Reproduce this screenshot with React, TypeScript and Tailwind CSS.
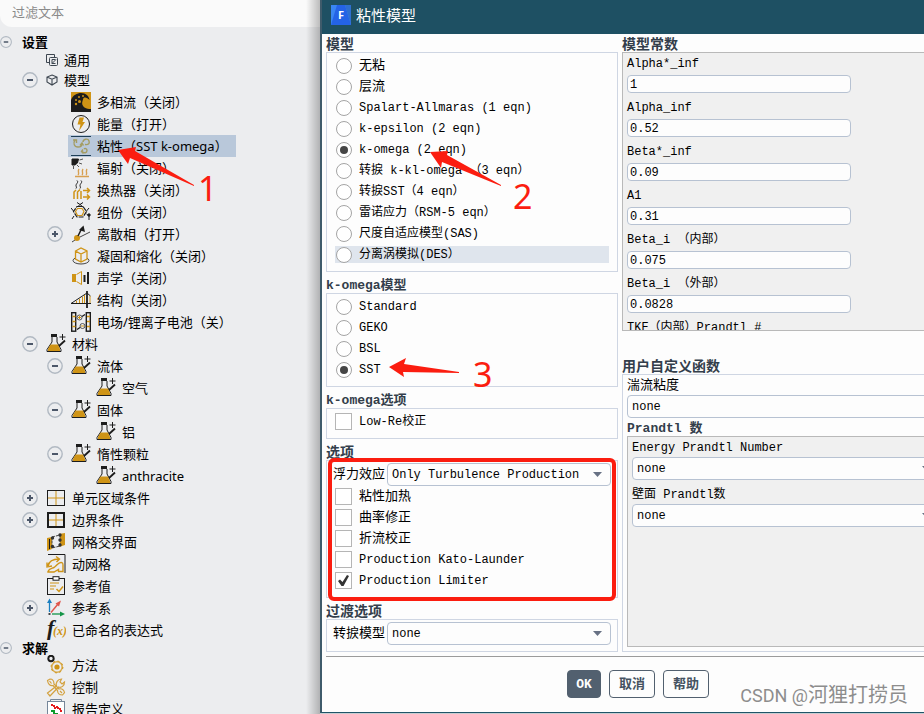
import React, { useId } from "react";

const GOLD = "#cf9416";
const INK = "#1c1c1c";

type IconProps = { children: React.ReactNode };

const Svg = ({ children }: IconProps) => (
  <svg viewBox="0 0 20 20" className="size-5 shrink-0" fill="none" stroke={INK} aria-hidden="true">
    {children}
  </svg>
);

const GeneralIcon = () => (
  <svg viewBox="0 0 12 12" className="size-3 shrink-0" fill="none" stroke="#3d4650" aria-hidden="true">
    <path d="M3 8.500H.5V.5h8V3" />
    <rect x="3.500" y="3.500" width="8" height="8" rx="1" />
    <path d="M9.500 5.500H6v4h3.500M6 9.500l4-4" />
  </svg>
);

const ModelIcon = () => (
  <svg viewBox="0 0 12 12" className="size-3 shrink-0" fill="none" stroke="#3d4650" strokeWidth="1.100" aria-hidden="true">
    <path d="M6 1l5 2v5L6 11 1 8V3zM1 3l5 2.200L11 3M6 5.200V11" />
  </svg>
);

const MultiphaseIcon = () => (
  <Svg>
    <rect width="20" height="20" fill={GOLD} stroke="none" />
    <path
      d="M0 20V8C2 3 6 1 10 1c5 0 8 3 8.500 7-2-2-4-3-6-2l-1 3c-1 3 0 5 2 6.500 2 1 4 1.500 6.500 1.500v3z"
      fill={INK}
      stroke="none"
    />
    <g fill={GOLD} stroke="none">
      <circle cx="5" cy="8" r="1" />
      <circle cx="8" cy="5" r="1" />
      <circle cx="5" cy="12" r="1.200" />
      <circle cx="8.500" cy="9.500" r="1.500" />
      <circle cx="12" cy="4" r="1" />
    </g>
  </Svg>
);

const EnergyIcon = () => (
  <Svg>
    <circle cx="10" cy="10" r="8.500" />
    <path d="M8.500 3.500h4.500L11.500 8H14L8 17l1.500-6.500h-3z" fill={GOLD} stroke="none" />
  </Svg>
);

const ViscousIcon = () => (
  <Svg>
    <path d="M0 .5h20M0 19.500h20" stroke="#1f3f57" />
    <g stroke="#a49c62" strokeWidth="1.400">
      <path d="M4 4c-2 3-1 7 3 7 2 0 4-1 4-3" />
      <path d="M12 6c0-3 5-4 6-1s-1 4-4 3.500M11 15.500c2 2 5 1.500 5-1 0-2-2-2.500-3-1.500" />
      <path d="M2 4h3.500V7M9 9.500L11 7l1.500 2.500M12 13.500l-1.500 2 2 2" />
    </g>
  </Svg>
);

const RadiationIcon = () => (
  <Svg>
    <path d="M1 1h6.500l-1 4L4 7H1z" fill={INK} />
    <path d="M8.500 2l3.500-1M8 5l3 1M6 7l2 2M2.500 8v3" stroke="#555" />
    <g stroke="#d8a050" strokeWidth="1.400">
      <path d="M4 18.500h14M7 17c2-2-1-3 1-6M11 17c2-2-1-3 1-6M15 17c2-2-1-3 1-6" />
    </g>
  </Svg>
);

const HeatIcon = () => (
  <Svg>
    <path d="M6 .5c2 2-1 3-1 5 0 1 1 2 0 3M10 .5c2 2-1 3-1 5 0 1 1 2 0 3" />
    <g stroke={GOLD} strokeWidth="1.500">
      <path d="M3 19v-7l2-2M6.500 19v-7L9 9.500M10 19v-8" />
      <path d="M12 10.500h6M12 17h6M16 8l2.500 2.500L16 13M16 14.500l2.500 2.500-2.500 2.500" />
    </g>
  </Svg>
);

const SpeciesIcon = () => (
  <Svg>
    <path d="M6 4.500h6l3.500 5-3.500 5.500H6l-3.500-5.500z" strokeWidth="1.200" strokeDasharray="5 1" />
    <path d="M6.500 5L9 2.500 12 5M9 2.500L6 .5M9 2.500L12 .5M2.500 9L0 6M15.500 9L18 6M15.500 12l2.500 2v4M3 14l-2 3" />
    <path d="M6.500 6.500h4.500l2 3-2 4H6.500l-2-4z" stroke={GOLD} strokeWidth="1.200" />
    <circle cx="18" cy="13" r="1.200" fill={INK} />
  </Svg>
);

const DiscreteIcon = () => (
  <Svg>
    <path d="M1 18l6-4 12-6" stroke="#444" />
    <circle cx="6" cy="14" r="3" fill={GOLD} stroke="none" />
    <path d="M7 12l4-8" strokeWidth="1.500" />
    <path d="M8 6l4.500-4.500L14 8z" fill={INK} stroke="none" />
  </Svg>
);

const SolidifyIcon = () => (
  <Svg>
    <ellipse cx="10" cy="14.500" rx="8" ry="3.500" stroke="#444" />
    <path
      d="M4.500 5L10 2l6 3v8l-6 3-5.500-3zM4.500 5L10 8l6-3M10 8v8"
      stroke={GOLD}
      strokeWidth="1.300"
      fill="#ecedef"
    />
  </Svg>
);

const AcousticIcon = () => (
  <Svg>
    <path d="M1 6h4v8H1z" fill={GOLD} stroke="none" />
    <path d="M5.500 6.500l5-3v13l-5-3" stroke={GOLD} />
    <path d="M13.500 7v7" strokeWidth="2" />
    <path d="M17 4v12" strokeWidth="2" />
  </Svg>
);

const StructureIcon = () => (
  <Svg>
    <path d="M0 13.500h20M0 13.500L16 3l3.500 3" />
    <path d="M16 1v17" strokeWidth="1.800" />
    <path d="M5.500 11v2M8.500 9v4M11.500 7v6M13.500 5v8M19 6v7" stroke={GOLD} />
  </Svg>
);

const BatteryIcon = () => (
  <Svg>
    <rect x=".700" y=".700" width="4" height="18.500" strokeWidth="1.400" />
    <rect x="15.300" y=".700" width="4" height="18.500" strokeWidth="1.400" />
    <path
      d="M1.500 4.500h3M1.500 9.500h3M1.500 14.500h3M16 4.500h3M16 9.500h3M16 14.500h3"
      stroke={GOLD}
      strokeWidth="1.300"
    />
    <circle cx="8.500" cy="5.500" r="2.500" stroke="#555" />
    <circle cx="11.500" cy="14" r="2.500" stroke="#555" />
    <path d="M7 5.500h3M8.500 4v3M10 14h3" stroke={GOLD} />
    <path d="M11 4.500l3-2M9 15.500l-3 2" strokeWidth="1.300" />
  </Svg>
);

const FlaskIcon = () => (
  <Svg>
    <path d="M5 0h6v3H5z" fill={INK} stroke="none" />
    <path d="M6 3v5L1 15.500v2h14v-2L11 8V3" />
    <path d="M4.500 10.500h7.500l2 4.500v2H2v-2z" fill={GOLD} stroke="none" />
    <path d="M16.500 0v6M13.500 3h6" />
    <path d="M13 12l6-5.500" strokeWidth="1.800" />
  </Svg>
);

const CellZoneIcon = () => (
  <Svg>
    <path d="M10 2v16M2 10h16" stroke={GOLD} />
    <rect x="1.500" y="2.500" width="17" height="15" />
  </Svg>
);

const BoundaryIcon = () => (
  <Svg>
    <path d="M10 3v14M2 10h16" stroke={GOLD} />
    <rect x="2" y="3" width="16" height="14" strokeWidth="2" />
  </Svg>
);

const InterfaceIcon = () => (
  <Svg>
    <path d="M1 6l5-1v12l-5 2zM13 2l6-1v12l-6 2z" fill={GOLD} stroke="none" />
    <path d="M3.500 7v10" />
    <path d="M6 5l8-2v11l-8 2z" fill="#ecedef" stroke="#444" strokeDasharray="3 1" />
    <g fill="#333" stroke="none">
      <circle cx="6.500" cy="6" r="1.700" />
      <circle cx="14" cy="3" r="1.700" />
      <circle cx="6.500" cy="14.500" r="1.700" />
      <circle cx="14" cy="8" r="1.700" />
      <circle cx="14" cy="13" r="1.700" />
    </g>
  </Svg>
);

const DynamicMeshIcon = () => (
  <Svg>
    <path d="M2 .5h17V19" />
    <g stroke={GOLD} strokeWidth="1.400">
      <path d="M2 12c1-5 5-7 11-7M10 2.500L13.500 5l-3 3M1 8.500V13l5-1" />
      <path d="M2 17.500c1-3 4-3 6-4 3-2 4-5 7-5 2 0 2 1 2 3v6h-4.500v-2L8 18H2z" />
    </g>
  </Svg>
);

const ReferenceIcon = () => (
  <Svg>
    <rect x="1.500" y="2.500" width="17" height="16" />
    <rect x="7" y=".7" width="6" height="3.500" fill="#fff" />
    <path d="M4 7h9M4 10h6M4 13h4" stroke={GOLD} />
    <path d="M10.500 13l2.500 2.500 4-5" stroke={GOLD} strokeWidth="1.500" />
  </Svg>
);

const FrameIcon = () => (
  <Svg>
    <path d="M3.500 14V3" stroke="#1b7fc0" strokeWidth="1.300" />
    <path d="M1 5L3.500.5 6 5z" fill="#1b7fc0" stroke="none" />
    <path d="M5 14.500L12 6" stroke="#e0564b" strokeWidth="1.400" />
    <path d="M9.500 5.500L15 2.500l-2 6z" fill="#e0564b" stroke="none" />
    <path d="M6 16h9" stroke="#149447" strokeWidth="1.300" />
    <path d="M14 13.500l5 2.500-5 2.500z" fill="#149447" stroke="none" />
    <path d="M2.500 16h2" stroke="#444" strokeWidth="2" />
  </Svg>
);

const ExpressionIcon = () => (
  <Svg>
    <g stroke="none" className="font-['Liberation_Serif',serif] font-bold italic">
      <text x="1" y="15" fontSize="22" fill={INK}>
        f
      </text>
      <text x="7" y="15" fontSize="12" fill={GOLD}>
        (x)
      </text>
    </g>
  </Svg>
);

const MethodsIcon = () => (
  <Svg>
    <circle cx="5" cy="3.500" r="2.700" strokeWidth="2" />
    <circle cx="11" cy="12" r="5.200" stroke="#d8ab4c" strokeWidth="1.500" />
    <circle cx="11" cy="12" r="5.900" stroke={GOLD} strokeDasharray="2 2.600" />
    <circle cx="11" cy="12" r="2.600" fill={GOLD} stroke="none" />
  </Svg>
);

const ControlsIcon = () => (
  <Svg>
    <g stroke="#d3a13f" strokeWidth="1.200">
      <path d="M1.500 16l9-7c-1-3 1-7 5-7l-1.500 3 2 2 2.500-2c0 4-3 6-6 5l-8.500 9z" />
      <path d="M1.500 3.500L4 2c3 0 4 2 4 5l5 5c3-1 5 1 5.500 3.500L16.500 18c-3 0-5-2-5-4.500L7 8.500C4 9 2 7 1.500 3.500zM3.500 4l2 2.500M14 14l2 2" />
    </g>
  </Svg>
);

const ReportIcon = () => (
  <Svg>
    <path d="M4.500 2.500V.5H15.500V2.500" stroke="#76879a" />
    <rect x="1.500" y="2.500" width="17" height="17" stroke="#76879a" fill="#fff" />
    <path d="M5 6h3v3h3V6m0 3h3v3h3" stroke="#e41a1c" strokeWidth="2" strokeDasharray="2 1" />
    <path d="M5 12h3v3h4" stroke="#0c9b2b" strokeWidth="2" />
  </Svg>
);

type Node = {
  label: string;
  icon: React.FC;
  depth: 0 | 1 | 2;
  toggle?: "open" | "closed";
  active?: boolean;
};

const setup: Node[] = [
  { label: "模型", icon: ModelIcon, depth: 0, toggle: "open" },
  { label: "多相流（关闭）", icon: MultiphaseIcon, depth: 1 },
  { label: "能量（打开）", icon: EnergyIcon, depth: 1 },
  { label: "粘性（SST k-omega）", icon: ViscousIcon, depth: 1, active: true },
  { label: "辐射（关闭）", icon: RadiationIcon, depth: 1 },
  { label: "换热器（关闭）", icon: HeatIcon, depth: 1 },
  { label: "组份（关闭）", icon: SpeciesIcon, depth: 1 },
  { label: "离散相（打开）", icon: DiscreteIcon, depth: 1, toggle: "closed" },
  { label: "凝固和熔化（关闭）", icon: SolidifyIcon, depth: 1 },
  { label: "声学（关闭）", icon: AcousticIcon, depth: 1 },
  { label: "结构（关闭）", icon: StructureIcon, depth: 1 },
  { label: "电场/锂离子电池（关）", icon: BatteryIcon, depth: 1 },
  { label: "材料", icon: FlaskIcon, depth: 0, toggle: "open" },
  { label: "流体", icon: FlaskIcon, depth: 1, toggle: "open" },
  { label: "空气", icon: FlaskIcon, depth: 2 },
  { label: "固体", icon: FlaskIcon, depth: 1, toggle: "open" },
  { label: "铝", icon: FlaskIcon, depth: 2 },
  { label: "惰性颗粒", icon: FlaskIcon, depth: 1, toggle: "open" },
  { label: "anthracite", icon: FlaskIcon, depth: 2 },
  { label: "单元区域条件", icon: CellZoneIcon, depth: 0, toggle: "closed" },
  { label: "边界条件", icon: BoundaryIcon, depth: 0, toggle: "closed" },
  { label: "网格交界面", icon: InterfaceIcon, depth: 0 },
  { label: "动网格", icon: DynamicMeshIcon, depth: 0 },
  { label: "参考值", icon: ReferenceIcon, depth: 0 },
  { label: "参考系", icon: FrameIcon, depth: 0, toggle: "closed" },
  { label: "已命名的表达式", icon: ExpressionIcon, depth: 0 },
];

const solution: Node[] = [
  { label: "方法", icon: MethodsIcon, depth: 0 },
  { label: "控制", icon: ControlsIcon, depth: 0 },
  { label: "报告定义", icon: ReportIcon, depth: 0 },
];

const indent = ["pl-[22px]", "pl-[47px]", "pl-[72px]"];

const Toggle = ({ state, small }: { state: "open" | "closed"; small?: boolean }) => (
  <button
    type="button"
    aria-label={state === "open" ? "收起" : "展开"}
    className={small ? "size-3 shrink-0" : "size-4 shrink-0"}
  >
    <svg viewBox="0 0 16 16" className="size-full" fill="none">
      <circle cx="8" cy="8" r="7.200" stroke="#b1b9c2" strokeWidth="1.400" />
      <path d={state === "open" ? "M5 8h6" : "M5 8h6M8 5v6"} stroke="#4c5769" strokeWidth="2" />
    </svg>
  </button>
);

const TreeRow = ({ label, icon: Icon, depth, toggle, active }: Node) => (
  <li className={`flex h-[22px] items-center ${indent[depth]}`}>
    {toggle ? <Toggle state={toggle} /> : <span className="w-4 shrink-0" />}
    <a
      href="#"
      className={`ml-[5px] flex h-full items-center gap-1.5 whitespace-nowrap pl-[3px] pr-2 ${
        active ? "bg-[#b9c8da]" : ""
      }`}
    >
      <Icon />
      {label}
    </a>
  </li>
);

const Sidebar = () => (
  <aside className="relative w-80 shrink-0 bg-[#ecedef] font-['Noto_Sans','Noto_Sans_CJK_SC',sans-serif] text-[13px] leading-5 text-black">
    <input
      type="text"
      aria-label="过滤文本"
      placeholder="过滤文本"
      className="block h-[27px] w-full rounded-bl-xl bg-[#fafafa] pb-1 pl-3 text-[13px] outline-none placeholder:text-[#8a8a8a]"
    />
    <nav className="pt-1.5">
      <div className="flex h-[17px] items-center gap-2.5 text-[13px] font-bold">
        <Toggle state="open" small />
        设置
      </div>
      <ul>
        <li className="flex h-[19px] items-center pl-[46px]">
          <a href="#" className="flex items-center gap-1.5">
            <GeneralIcon />
            通用
          </a>
        </li>
        {setup.map((node) => (
          <TreeRow key={node.label} {...node} />
        ))}
      </ul>
      <div className="flex h-[13px] items-center gap-2.5 text-[13px] font-bold">
        <Toggle state="open" small />
        求解
      </div>
      <ul>
        {solution.map((node) => (
          <TreeRow key={node.label} {...node} />
        ))}
      </ul>
    </nav>
    {/* Shadow cast by the dialog */}
    <div className="pointer-events-none absolute inset-y-0 right-0 w-3.5 bg-linear-to-r from-transparent to-black/25" />
  </aside>
);

const Heading = ({ id, children }: { id?: string; children: string }) => (
  <h2
    id={id}
    className={`h-4 whitespace-nowrap font-bold leading-[18px] text-[#333e4b] ${
      /[a-z]/i.test(children) ? "text-[13px]" : "text-sm"
    }`}
  >
    {children}
  </h2>
);

const Group = ({ title, children }: { title: string; children: React.ReactNode }) => {
  const id = useId();
  return (
    <section role="group" aria-labelledby={id}>
      <Heading id={id}>{title}</Heading>
      <div className="relative border border-[#cfd6e3] pb-1.5 pt-0.5">{children}</div>
    </section>
  );
};

const textSize = (label: string) => (/[a-z]/i.test(label) ? "text-xs" : "text-[13px]");

type ChoiceProps = { label: string; name?: string; checked?: boolean; hover?: boolean };

const Radio = ({ label, name, checked, hover }: ChoiceProps) => (
  <div className="flex h-[21px] items-center px-2">
    <label
      className={`flex h-[17px] w-full items-center gap-[7px] whitespace-nowrap pl-px ${textSize(label)} ${
        hover ? "bg-[#dfe5ed]" : ""
      }`}
    >
      <input
        type="radio"
        name={name}
        defaultChecked={checked}
        className="grid size-4 shrink-0 appearance-none place-content-center rounded-full border border-[#a4a4a4] bg-white checked:before:size-2 checked:before:rounded-full checked:before:bg-[#454545]"
      />
      {label}
    </label>
  </div>
);

const Checkbox = ({ label, checked }: ChoiceProps) => (
  <div className="flex h-[21px] items-center px-2">
    <label className={`relative flex items-center gap-[7px] whitespace-nowrap ${textSize(label)}`}>
      <input
        type="checkbox"
        defaultChecked={checked}
        className="peer size-[17px] shrink-0 appearance-none border border-[#b5b5b5] bg-white"
      />
      <svg viewBox="0 0 17 17" className="absolute left-0 hidden size-[17px] peer-checked:block" aria-hidden="true">
        <path d="M3 9l2-1.500 2.500 2.500L12 3l2 1-5.500 10h-2z" fill="#333" />
      </svg>
      {label}
    </label>
  </div>
);

const Select = ({ id, value }: { id: string; value: string }) => (
  <div className="relative min-w-0 flex-1">
    <select
      id={id}
      defaultValue={value}
      className="block h-[23px] w-full appearance-none rounded border border-[#b7c2d2] bg-[#fdfdfd] pl-1 pr-6 pt-px text-xs outline-none"
    >
      <option>{value}</option>
    </select>
    <svg viewBox="0 0 9 5" className="pointer-events-none absolute right-[9px] top-[9px] h-[5px] w-[9px]" aria-hidden="true">
      <path d="M0 0h9L4.500 5z" fill="#677184" />
    </svg>
  </div>
);

const InlineSelect = ({ label, value }: { label: string; value: string }) => {
  const id = useId();
  return (
    <div className="flex items-center gap-0.5 px-1.5">
      <label htmlFor={id} className="text-[13px]">
        {label}
      </label>
      <Select id={id} value={value} />
    </div>
  );
};

const StackedSelect = ({ label, value }: { label: string; value: string }) => {
  const id = useId();
  return (
    <div>
      <label htmlFor={id} className={`block h-5 leading-[22px] ${textSize(label)}`}>
        {label}
      </label>
      <Select id={id} value={value} />
    </div>
  );
};

const models = [
  "无粘",
  "层流",
  "Spalart-Allmaras (1 eqn)",
  "k-epsilon (2 eqn)",
  "k-omega (2 eqn)",
  "转捩 k-kl-omega （3 eqn）",
  "转捩SST（4 eqn）",
  "雷诺应力（RSM-5 eqn）",
  "尺度自适应模型(SAS)",
  "分离涡模拟(DES）",
];

const constants = [
  ["Alpha*_inf", "1"],
  ["Alpha_inf", "0.52"],
  ["Beta*_inf", "0.09"],
  ["A1", "0.31"],
  ["Beta_i （内部）", "0.075"],
  ["Beta_i （外部）", "0.0828"],
  ["TKE（内部）Prandtl #", "1.176"],
];

const ModelColumn = () => (
  <div className="flex w-[292px] shrink-0 flex-col gap-[5px]">
    <Group title="模型">
      {models.map((m) => (
        <Radio key={m} name="model" label={m} checked={m === "k-omega (2 eqn)"} hover={m === "分离涡模拟(DES）"} />
      ))}
    </Group>
    <Group title="k-omega模型">
      {["Standard", "GEKO", "BSL", "SST"].map((m) => (
        <Radio key={m} name="komega" label={m} checked={m === "SST"} />
      ))}
    </Group>
    <Group title="k-omega选项">
      <Checkbox label="Low-Re校正" />
    </Group>
    <Group title="选项">
      <InlineSelect label="浮力效应" value="Only Turbulence Production" />
      <Checkbox label="粘性加热" />
      <Checkbox label="曲率修正" />
      <Checkbox label="折流校正" />
      <Checkbox label="Production Kato-Launder" />
      <Checkbox label="Production Limiter" checked />
      <div className="pointer-events-none absolute -bottom-1 -top-[3px] left-px right-px rounded-md border-4 border-[#fb1d10]" />
    </Group>
    <Group title="过渡选项">
      <InlineSelect label="转捩模型" value="none" />
    </Group>
  </div>
);

const ConstantsColumn = () => (
  <div className="flex min-w-0 flex-1 flex-col">
    <Heading>模型常数</Heading>
    <div className="h-[279px] overflow-hidden border border-[#b9b9b9] bg-[#f0f0f0] px-1">
      {constants.map(([label, value]) => (
        <label key={label} className="mb-1 block text-xs">
          <span className="mb-0.5 block h-5 leading-[22px]">{label}</span>
          <input
            type="text"
            defaultValue={value}
            className="block h-[18px] w-56 rounded border border-[#b7c2d2] bg-[#fdfdfd] px-0.5 pt-px outline-none"
          />
        </label>
      ))}
    </div>
    <div className="mt-[27px] flex flex-1 flex-col">
      <Heading>用户自定义函数</Heading>
      <div className="flex flex-1 flex-col border border-[#cfd6e3] px-1 pb-1">
        <StackedSelect label="湍流粘度" value="none" />
        <div className="mt-0.5 flex flex-1 flex-col">
          <Heading>Prandtl 数</Heading>
          <div className="flex flex-1 flex-col gap-1 border border-[#b9b9b9] bg-[#f0f0f0] px-1">
            <StackedSelect label="Energy Prandtl Number" value="none" />
            <StackedSelect label="壁面 Prandtl数" value="none" />
          </div>
        </div>
      </div>
    </div>
  </div>
);

const FluentLogo = () => (
  <span className="relative flex size-5 items-center justify-center bg-[#3a86f3]">
    <svg viewBox="0 0 20 20" className="absolute inset-0 size-5" aria-hidden="true">
      <path d="M0 20L6 0h8l6 20z" fill="#2463e6" />
      <path d="M14 0h6v20z" fill="#2e6fd0" />
    </svg>
    <span className="relative font-['Open_Sans',sans-serif] text-[11px] font-bold leading-5 text-white">F</span>
  </span>
);

const button = "h-7 rounded border border-[#52606f] text-[13px] font-bold leading-none";

const Dialog = () => (
  <main className="-mr-[30px] mb-px flex min-w-0 flex-1 flex-col border-b border-l-2 border-[#1f5468] border-l-[#3f5b6b] bg-[#fdfdfd] font-['Liberation_Mono','Noto_Sans_CJK_SC',monospace] text-black">
    <header className="flex h-[34px] shrink-0 items-center gap-[5px] bg-[#1e5063] pb-1 pl-[9px]">
      <FluentLogo />
      <h1 className="font-['Noto_Sans_CJK_SC',sans-serif] text-[15px] leading-5 text-white">粘性模型</h1>
    </header>
    <div className="flex gap-1 px-1 pt-0.5">
      <ModelColumn />
      <ConstantsColumn />
    </div>
    <footer className="mx-1 mt-1 flex justify-center gap-2 border-t border-[#9b9b9b] pt-[13px]">
      <button type="button" className={`${button} w-[34px] bg-[#52606f] text-white`}>
        OK
      </button>
      <button type="button" className={`${button} w-[46px] bg-[#fdfdfd] text-[#455261]`}>
        取消
      </button>
      <button type="button" className={`${button} w-[46px] bg-[#fdfdfd] text-[#455261]`}>
        帮助
      </button>
    </footer>
  </main>
);

// Numbered step arrows drawn over the tree and the dialog
const Steps = () => (
  <svg
    width="620"
    height="420"
    className="pointer-events-none absolute left-0 top-0 font-['Noto_Sans',sans-serif] text-[34px]"
    fill="#fb1d10"
  >
    <path d="M118 150l18-3-1 4 59 34v1l-64-28-2 6z" />
    <path d="M430 152l18-1-1 4 54 30v1l-59-24-1 6z" />
    <path d="M389 367l17-9-2 6 55 8v1l-56-1 1 5z" />
    <text x="198" y="201">1</text>
    <text x="513" y="209">2</text>
    <text x="473" y="387">3</text>
  </svg>
);

const App = () => (
  <div className="relative flex h-screen overflow-hidden bg-[#c9ccd0]">
    <Sidebar />
    <Dialog />
    <Steps />
    <div className="pointer-events-none absolute bottom-1.5 right-4 flex items-baseline font-['Roboto','Noto_Sans_CJK_SC',sans-serif] leading-6 text-[#8d8d8d]">
      <span className="text-lg leading-6">CSDN @</span>
      <span className="text-xl leading-6">河狸打捞员</span>
    </div>
  </div>
);

export default App;
